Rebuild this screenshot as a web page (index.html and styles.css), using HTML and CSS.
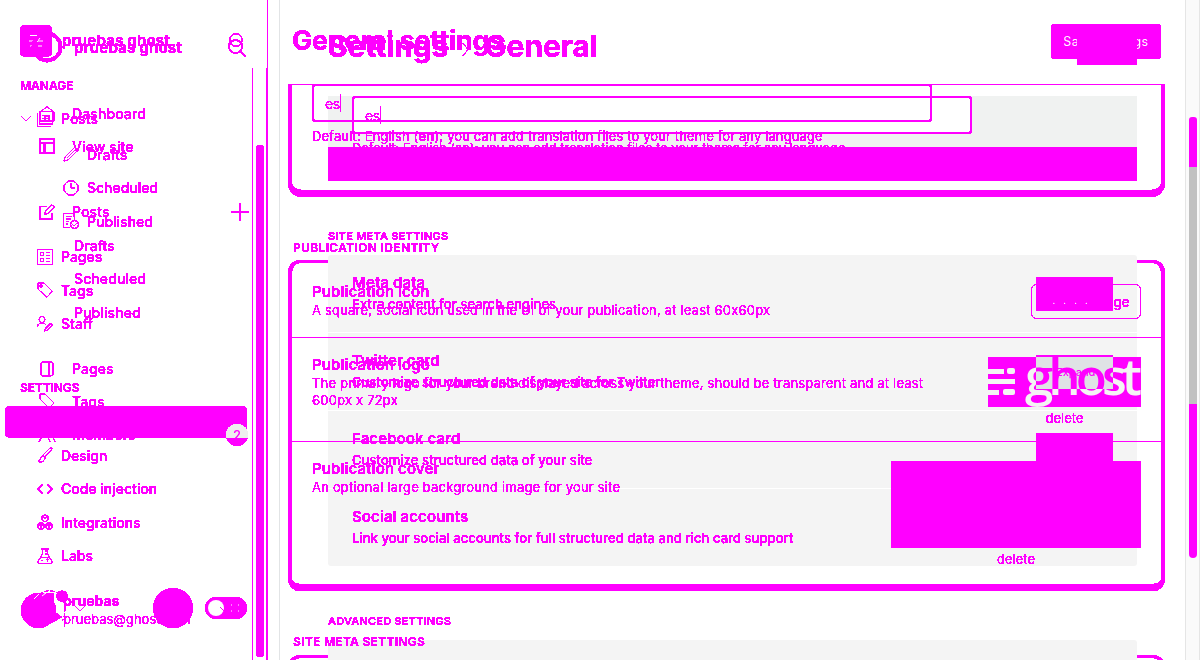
FILE: index.html
```html
<!DOCTYPE html>
<html lang="en">
<head>
<meta charset="utf-8">
<title>Settings - General</title>
<link rel="stylesheet" href="styles.css">
</head>
<body>
<svg class="defs" width="0" height="0"><filter id="crisp" x="0" y="0" width="100%" height="100%" color-interpolation-filters="sRGB"><feComponentTransfer><feFuncA type="discrete" tableValues="0 1 1 1 1 1"/></feComponentTransfer></filter></svg>
<div class="stage">

<div class="layer base">
  <div class="base-nav"></div>
  <div class="base-main">
    <div class="tile tile-lang"><div class="field"></div></div>
    <div class="tile tile-meta"><i></i><i></i><i></i><i></i></div>
    <div class="tile tile-next"></div>
  </div>
  <div class="page-scroll"><div class="page-thumb top"></div><div class="page-thumb mid"></div><div class="page-thumb low"></div></div>
</div>

<div class="layer crisp view-b">
  <nav class="nav-b">
    <header class="brand-b"><span class="brand-square"><svg viewBox="0 0 32 32"><path d="M10 10.500h7M9 16h4M17 16h6M10 21h4M18 21h4M20 13l-3 4"/></svg></span><strong>pruebas ghost</strong><svg class="ic find-b" viewBox="0 0 16 16"><circle cx="8" cy="7" r="6.2"/><path d="M2.500 11q5.500 4 11 0"/></svg></header>
    <h4 class="manage">MANAGE</h4>
    <div class="item posts"><svg class="chev" viewBox="0 0 10 6"><path d="M.7.7 5 5 9.3.7"/></svg><svg class="ic" viewBox="0 0 16 16"><path d="M.5 2v13.500h13M2.500.5h13v12.500h-13zM5 4.500h8M5 7.500h8M5 10.500h4" /></svg><span>Posts</span></div>
    <div class="item sub drafts"><svg class="ic" viewBox="0 0 16 16"><path d="m1 15 1-4L12 1l3 3L5 14zM4 12l8-8"/></svg><span>Drafts</span></div>
    <div class="item sub"><svg class="ic" viewBox="0 0 16 16"><circle cx="8" cy="8" r="7.300"/><path d="M8 3.500V8h4"/></svg><span>Scheduled</span></div>
    <div class="item sub"><svg class="ic" viewBox="0 0 16 16"><path d="M7 14.500H.5V.5h11v6M3 3.500h6M3 6h5M3 8.500h3M3 11h2"/><circle cx="11.500" cy="11.500" r="4"/><path d="m9.500 11.500 1.500 1.500 3-3"/></svg><span>Published</span></div>
    <div class="item pages"><svg class="ic" viewBox="0 0 16 16"><path d="M.5.5h15v15H.5zM3.500 3.500h3v3h-3zM3.500 9.500h3v3h-3zM9 3.500h4M9 6.500h4M9 9.500h4M9 12.500h4"/></svg><span>Pages</span></div>
    <div class="item"><svg class="ic tag" viewBox="0 0 16 16"><path d="M1 1h6l8.300 8.300-5.500 6L1 7z"/><circle cx="4" cy="4" r="1"/></svg><span>Tags</span></div>
    <div class="item"><svg class="ic" viewBox="0 0 16 16"><circle cx="5" cy="3.500" r="3"/><path d="M.5 11c0-3 2-4 4.500-4s3.500 1 4 2M7.500 15l1-3 5-5 2 2-5 5zM9 13l5-5"/></svg><span>Staff</span></div>
    <h4 class="settings">SETTINGS</h4>
    <div class="active-bar"></div>
    <div class="item design"><svg class="ic" viewBox="0 0 16 16"><path d="m6 8 7-7q2-.5 2 1l-7 8zM6 9c-3 0-2 4-5 5.500 4 1.500 7-1 7-4zM6 9l2 2"/></svg><span>Design</span></div>
    <div class="item"><svg class="ic bold" viewBox="0 0 16 16"><path d="M5.500 3 1 8l4.500 5M10.500 3 15 8l-4.500 5"/></svg><span>Code injection</span></div>
    <div class="item"><svg class="ic" viewBox="0 0 16 16"><path d="m8 .7 3 1.500v4L8 7.700 5 6.200v-4zM4 8.500l3 1.500v4l-3 1.500L1 14v-4zM12 8.500l3 1.500v4l-3 1.500L9 14v-4zM5 2.500l3 1.500 3-1.500M1 10l3 1.500L7 10M4 11v4M9 10l3 1.500 3-1.500M12 11v4"/></svg><span>Integrations</span></div>
    <div class="item"><svg class="ic" viewBox="0 0 16 16"><path d="M4 .7h8M5.500 1v5L1 13.500q-.5 2 1.500 2h11q2 0 1.500-2L10.500 6V1M3 9.500h10M8 3h2M8 6h2M4 12.500h2M9 11.500h3M10.500 10.500v3"/></svg><span>Labs</span></div>
    <footer class="user-b"><span class="avatar"></span><div><strong>pruebas</strong><p>pruebas@ghost.com</p></div></footer>
  </nav>
  <main class="main-b">
    <div class="head-b"><h1>General settings</h1><button class="save">Save settings</button></div>
    <section class="box box-lang"><div class="input">es<i class="caret"></i></div><p>Default: English (<b>en</b>); you can add translation files to your theme for any language</p></section>
    <h4 class="identity">PUBLICATION IDENTITY</h4>
    <section class="box box-pub">
      <div class="line l1"><div><h3>Publication icon</h3><p class="d1">A square, social icon used in the UI of your publication, at least 60x60px</p></div><button class="upload">Upload image</button></div>
      <div class="line l2"><div><h3>Publication logo</h3><p class="d2">The primary logo for your brand displayed across your theme, should be transparent and at least<br><span>600px x 72px</span></p></div></div>
      <div class="line l3"><div><h3>Publication cover</h3><p class="d3">An optional large background image for your site</p></div><div class="cover-wrap"><div class="cover"></div><a>delete</a></div></div>
    </section>
    <h4 class="site-b">SITE META SETTINGS</h4>
    <section class="box box-next"></section>
  </main>
</div>

<div class="layer crisp view-a">
  <nav class="nav-a">
    <header class="brand-a"><svg class="ring" viewBox="0 0 32 32"><circle cx="16" cy="16" r="13.500"/></svg><strong>pruebas ghost</strong><svg class="find-a" viewBox="0 0 18 18"><circle cx="7.500" cy="7.500" r="6.600"/><path d="m12.500 12.500 5 5"/></svg></header>
    <div class="item"><svg class="ic" viewBox="0 0 16 16"><path d="M1 6 8 .8 15 6v9H1zM6 15v-5h4v5"/></svg><span>Dashboard</span></div>
    <div class="item a-view"><svg class="ic bold" viewBox="0 0 16 16"><path d="M.8.8h14.400v14.400H.8zM1 5h14M5.500 5v10"/></svg><span>View site</span></div>
    <div class="item a-posts"><svg class="ic" viewBox="0 0 16 16"><path d="M8 2.500H.8v12.700h12.500V9M5.500 10l1-3L13 .8 15.200 3 9 9.500z"/></svg><span>Posts</span><svg class="plus" viewBox="0 0 18 18"><path d="M9 0v18M0 9h18"/></svg></div>
    <div class="item a-sub"><span>Drafts</span></div>
    <div class="item a-sub"><span>Scheduled</span></div>
    <div class="item a-sub"><span>Published</span></div>
    <div class="item a-pages"><svg class="ic" viewBox="0 0 16 16"><path d="M4 .8h8q2 0 2 2v10q0 2-2 2h-2M3 .8h5q2 0 2 2v12.500H4q-2 0-2-2V2z"/></svg><span>Pages</span></div>
    <div class="item a-tags"><svg class="ic" viewBox="0 0 16 16"><path d="M1 1h5l9 9-5 5-9-9z"/></svg><span>Tags</span></div>
    <div class="item"><svg class="ic" viewBox="0 0 16 16"><circle cx="6" cy="5" r="3"/><circle cx="12" cy="6" r="2"/><path d="M0 15q1-5 6-6 4 1 5 6M11 9q4 1 5 6"/></svg><span>Members</span><span class="badge">2</span></div>
    <footer class="user-a"><svg class="face" viewBox="0 0 46 36"><path class="fill" d="M10 8 20 4l13-1v18l8 6-12 7H18L8 28z"/><circle class="fill" cx="41" cy="6" r="5.500"/><path class="dash" d="M14 9Q21 0 31 1q13 3 13 18 0 8-3 12"/><path class="white" d="m13 9 5-5M21 6l4-3"/></svg><svg class="chev-a" viewBox="0 0 14 8"><path d="m1 1 6 6 6-6"/></svg><span class="disc"></span><span class="toggle"><i></i><svg viewBox="0 0 20 20"><path class="slash" d="m0 9 4 4"/><path d="M11 7h1M18 7h1M11 13h1M18 13h1"/></svg></span></footer>
  </nav>
  <div class="nav-rule"></div>
  <div class="nav-scroll"><div class="nav-thumb"></div></div>
  <main class="main-a">
    <div class="head-a"><h1>Settings<svg viewBox="0 0 8 16"><path d="m1 1 6 7-6 7"/></svg>General</h1><span class="save-a"></span></div>
    <section class="lang-a"><div class="input">es<i class="caret"></i></div><p>Default: English (en); you can add translation files to your theme for any language</p></section>
    <div class="block-a"></div>
    <h4 class="meta-h">SITE META SETTINGS</h4>
    <div class="row-a"><div><h3>Meta data</h3><p>Extra content for search engines</p></div><span class="expand first"><em>....</em></span></div>
    <div class="row-a"><div><h3>Twitter card</h3><p>Customize structured data of your site for Twitter</p></div></div>
    <div class="row-a"><div><h3>Facebook card</h3><p>Customize structured data of your site</p></div><span class="expand third"></span></div>
    <div class="row-a"><div><h3>Social accounts</h3><p>Link your social accounts for full structured data and rich card support</p></div></div>
    <h4 class="adv-h">ADVANCED SETTINGS</h4>
  </main>
</div>

<svg class="logo-overlay crisp" viewBox="0 0 153 75">
  <defs><clipPath id="cut"><rect x="48" y="2" width="77" height="32"/></clipPath><clipPath id="frame"><rect width="153" height="52"/></clipPath></defs>
  <rect class="m" y="2" width="153" height="50"/>
  <g class="w"><rect y="14" width="16" height="5"/><rect x="19" y="13" width="8" height="6" rx="2"/><rect y="24" width="27" height="5"/><rect y="35" width="11" height="5"/><rect x="15" y="34" width="12" height="6" rx="2"/></g>
  <g clip-path="url(#frame)"><text class="w word" x="37" y="40" textLength="117">ghost</text></g>
  <rect class="g" x="48" y="2" width="77" height="32"/><rect class="m" x="48" width="77" height="2"/>
  <g clip-path="url(#cut)"><text class="m word" x="37" y="40" textLength="117">ghost</text><text class="m small" x="68" y="21">Expand</text></g>
  <text class="m del" x="57.500" y="68">delete</text>
</svg>
</div>
</body>
</html>
```

FILE: styles.css
```css
* { box-sizing: border-box; }
body { margin: 0; background: #fff; font-family: Inter, "Liberation Sans", sans-serif; font-feature-settings: "calt" 0; color: #f0f; overflow: hidden; }
h1, h3, h4, p { margin: 0; }
h1, h3, h4, p, strong { white-space: nowrap; }
i { display: block; font-style: normal; }
.defs { position: absolute; }
.stage { position: relative; width: 1200px; height: 660px; overflow: hidden; }
.layer { position: absolute; inset: 0; display: flex; overflow: hidden; }
.crisp { filter: url(#crisp); }
svg { fill: none; stroke: #f0f; stroke-width: 1; flex: none; overflow: visible; }
button { font-family: inherit; padding: 0; }

/* grey surfaces */
.base-nav { width: 280px; border-right: 1px solid #e2e4e6; flex: none; }
.base-main { width: 905px; padding-left: 48px; flex: none; }
.tile { width: 809px; background: #f4f4f4; border-radius: 3px; }
.tile-lang { margin-top: 96px; height: 85px; background: #f0f2f1; border-radius: 0; padding-left: 24px; }
.field { width: 620px; height: 38px; border-radius: 4px; background: #fff; }
.tile-meta { margin-top: 74px; height: 311px; }
.tile-meta i { height: 78px; border-bottom: 1px solid #fff; }
.tile-meta i:last-child { border: 0; }
.tile-next { margin-top: 74px; height: 30px; }
.page-scroll { width: 15px; background: #fafafa; border: solid #e5e5e5; border-width: 0 1px; padding: 117px 2px 0 3px; }
.page-thumb { width: 8px; background: #f0f; }
.page-thumb.top { height: 50px; border-radius: 3px 3px 0 0; }
.page-thumb.mid { height: 237px; background: #c1c1c1; }
.page-thumb.low { height: 154px; border-radius: 0 0 4px 4px; }

/* sidebar with section headings */
.nav-b { width: 288px; flex: none; }
.brand-b { display: flex; padding: 25px 0 0 20px; height: 76px; align-items: flex-start; }
.brand-square { width: 32px; height: 32px; border-radius: 5px; background: #f0f; }
.brand-square svg { display: block; width: 32px; height: 32px; stroke: #fff; }
.brand-b strong { font-size: 15px; line-height: 32px; margin-left: 10px; width: 166px; letter-spacing: .15px; }
.find-b { margin-top: 8px; }
h4 { font-size: 12px; font-weight: 600; line-height: 20px; height: 20px; }
.nav-b h4 { padding-left: 20px; }
.nav-b h4.manage { margin-bottom: 6px; }
.item { height: 33.500px; display: flex; align-items: center; font-size: 14px; font-weight: 500; }
.nav-b .item { padding-left: 37px; }
.ic { width: 16px; height: 16px; }
.nav-b .item span { margin-left: 8px; }
.nav-b .item.posts { padding-left: 21px; }
.chev { width: 10px; height: 6px; margin-right: 6px; }
.nav-b .item.sub { padding-left: 63px; }
.item.drafts { margin-top: 2px; }
.item.pages { margin-top: 2px; }
.bold { stroke-width: 1.500; }
.nav-b h4.settings { margin-top: 37px; height: 28px; letter-spacing: -.1px; }
.active-bar { width: 242px; height: 32px; margin-left: 5px; border-radius: 5px; background: #f0f; }
.item.design { margin-top: 1px; }
.user-b { display: flex; padding: 20px 0 0 21px; }
.avatar { width: 35px; height: 35px; border-radius: 50%; background: #f0f; }
.user-b div { margin-left: 7px; }
.user-b strong { display: block; font-size: 14px; line-height: 19px; margin-top: -2px; }
.user-b p { font-size: 13px; line-height: 19px; }

/* bordered settings */
.main-b { width: 877px; flex: none; }
.head-b { height: 84px; display: flex; justify-content: space-between; padding: 24px 4px 0; }
.head-b h1 { font-size: 27px; line-height: 33px; letter-spacing: -.2px; }
.save { width: 110px; height: 35px; border: 0; border-radius: 4px; background: #f0f; color: #fff; font-size: 12.500px; letter-spacing: .5px; }
.box { border: 4px solid #f0f; border-top-width: 3px; border-bottom-width: 7px; border-radius: 12px; }
.box-lang { height: 113px; border-top-width: 1px; border-radius: 0 0 14px 14px; padding-left: 20px; }
.input { width: 620px; height: 38px; border: 2px solid #f0f; border-radius: 4px; padding-left: 11px; font-size: 14px; letter-spacing: -.3px; display: flex; align-items: center; }
.box-lang .input { margin-top: -1px; }
.caret { width: 1px; height: 18px; background: #f0f; }
.box-lang p { font-size: 13px; line-height: 20px; margin-top: 4px; letter-spacing: .12px; }
.identity { margin: 41px 0 2px 5px; letter-spacing: .35px; }
.box-pub { height: 331px; }
/* the grey surface continues over the top edge */
.box-pub::before, .box-next::before { content: ""; display: block; height: 3px; margin: -3px 24px 0 36px; background: #f4f4f4; }
.line { display: flex; justify-content: space-between; padding: 19px 20px 0; }
.l1 { height: 74px; }
.l2 { height: 104px; border-top: 1px solid #f0f; padding-top: 17px; }
.l3 { border-top: 1px solid #f0f; }
h3 { font-size: 15px; font-weight: 600; line-height: 20px; letter-spacing: .1px; }
.line p { font-size: 13px; line-height: 17px; letter-spacing: .19px; }
.upload { width: 110px; height: 35px; margin-top: 2px; border: 1px solid #f0f; border-radius: 5px; background: none; color: #f0f; font-size: 13px; font-weight: 500; letter-spacing: .1px; }
.cover-wrap { width: 250px; text-align: center; }
.cover { height: 87px; background: #f0f; }
.l3 { padding-top: 19px; }
.l3 h3 { margin-top: -2px; }
.cover-wrap a { font-size: 13px; line-height: 23px; display: block; }
.site-b { margin: 41px 0 3px 5px; letter-spacing: .32px; }
.box-next { height: 40px; }

/* sidebar with flat list */
.nav-a { width: 252px; flex: none; }
.brand-a { height: 97px; padding: 31px 0 0 31px; display: flex; align-items: flex-start; }
.ring { width: 32px; height: 32px; stroke-width: 3.500; }
.brand-a strong { margin-left: 11px; width: 154px; font-size: 15px; line-height: 33px; letter-spacing: .15px; }
.find-a { width: 18px; height: 18px; margin-top: 8px; stroke-width: 1.500; }
.nav-a .item { padding-left: 39px; letter-spacing: .1px; }
.nav-a .item span { margin-left: 17px; }
.nav-a .item.a-view { margin-top: -1px; }
.nav-a .a-posts { margin-top: 32px; }
.nav-a .plus { width: 18px; height: 18px; margin-left: 121px; stroke-width: 1.500; }
.nav-a .a-sub { padding-left: 57px; }
.nav-a .a-pages { margin-top: 23px; }
.nav-a .a-tags { margin-top: -1px; }
.nav-a .item .badge { margin-left: 90px; width: 22px; height: 22px; border-radius: 11px; text-align: center; line-height: 22px; background: linear-gradient(#eee 14px, #f0f 14px); font-size: 13px; flex: none; }
.user-a { display: flex; margin-top: 136px; padding-left: 21px; }
.face { width: 46px; height: 36px; margin-top: 2px; }
.fill { fill: #f0f; stroke: none; }
.dash { stroke-dasharray: 4 2; }
.white { stroke: #fff; }
.chev-a { width: 14px; height: 8px; margin: 16px 0 0 6px; }
.disc { width: 40px; height: 40px; border-radius: 50%; background: #f0f; margin-left: 66px; flex: none; }
.toggle { width: 42px; height: 22px; margin: 9px 0 0 12px; border-radius: 11px; background: #f0f; flex: none; padding: 3px; display: flex; }
.toggle i { width: 16px; height: 16px; border-radius: 50%; background: #fff; flex: none; }
.toggle svg { width: 20px; height: 20px; margin: -2px 0 0 -4px; stroke: #fff; }
.toggle .slash { stroke: #f0f; }
.nav-rule { width: 1px; background: #f0f; margin-top: 68px; flex: none; }
.nav-scroll { width: 15px; border-right: 1px solid #f0f; padding: 145px 0 3px 3px; flex: none; background: linear-gradient(#f0f, #f0f) 13px 68px / 1px 600px no-repeat; }
.nav-thumb { width: 8px; height: 512px; border-radius: 3px; background: #f0f; }

/* flat settings */
.main-a { width: 869px; padding-left: 60px; flex: none; }
.head-a { display: flex; justify-content: space-between; height: 96px; padding-top: 30px; }
.head-a h1 { font-size: 30px; line-height: 33px; letter-spacing: -.1px; }
.head-a svg { width: 7px; height: 15px; margin: 0 15px 0 14px; }
.save-a { width: 60px; height: 35px; background: #f0f; }
.lang-a { height: 51px; padding-left: 24px; overflow: hidden; }
.lang-a p { font-size: 13px; line-height: 20px; margin-top: 4px; letter-spacing: -.08px; }
.block-a { height: 34px; background: #f0f; }
.meta-h { margin: 45px 0 9px; font-size: 11px; letter-spacing: .25px; }
.row-a { height: 78px; padding: 18px 24px; display: flex; justify-content: space-between; }
.row-a p { font-size: 13px; font-weight: 500; line-height: 20px; margin-top: .5px; letter-spacing: .06px; }
.expand { width: 77px; height: 34px; border-radius: 2px; background: #f0f; margin-top: 4px; color: #fff; }
.expand em { display: block; text-align: center; font-size: 10px; letter-spacing: 8px; line-height: 46px; }
.adv-h { margin-top: 44px; font-size: 11px; letter-spacing: .2px; }

/* uploaded logo */
.logo-overlay { position: absolute; left: 988px; top: 355px; width: 153px; height: 75px; stroke: none; }
.m { fill: #f0f; }
.w { fill: #f4f4f4; }
.g { fill: #dfe2e5; }
.word { font: 600 51px "Open Sans", sans-serif; }
.small { font-size: 11px; font-weight: 500; }
.del { font-size: 13px; }
```
